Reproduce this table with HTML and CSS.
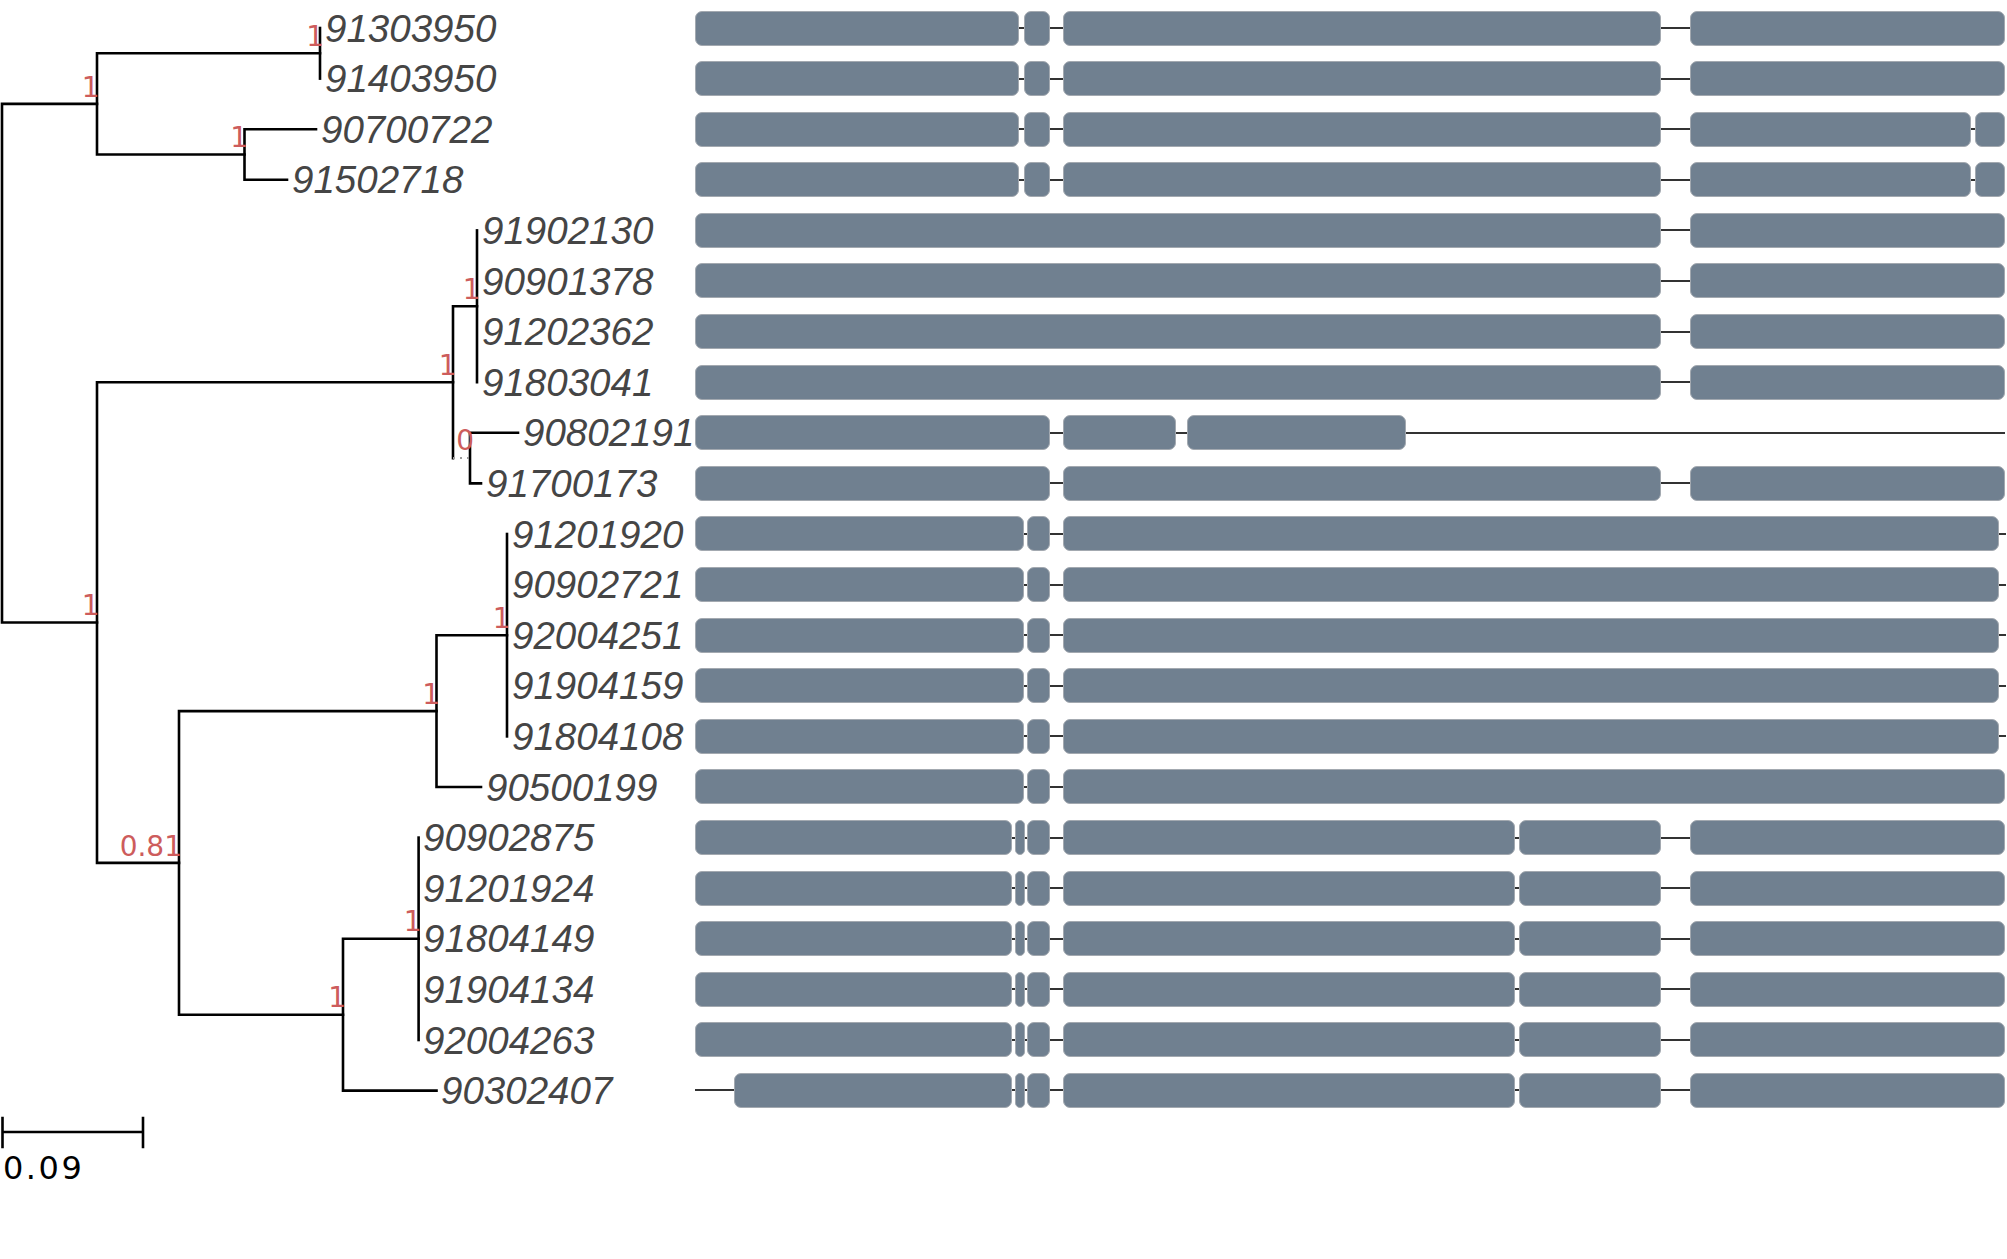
FILE: index.html
```html
<!DOCTYPE html>
<html lang="en">
<head>
<meta charset="utf-8">
<title>Phylogeny and gene structure</title>
<link rel="stylesheet" href="styles.css">
</head>
<body>
<main class="figure">
  <svg class="tree" width="695" height="1259" viewBox="0 0 695 1259" xmlns="http://www.w3.org/2000/svg">
    <g class="branches">
      <!-- root -->
      <path d="M2 103.9V622.5M2 103.9H97M2 622.5H97"/>
      <!-- A -->
      <path d="M97 53.3V154.5M97 53.3H320M97 154.5H244.5"/>
      <path d="M320 28V78.6"/>
      <path d="M244.5 129.2V179.8M244.5 129.2H316M244.5 179.8H287"/>
      <!-- B -->
      <path d="M97 382.2V862.9M97 382.2H453M97 862.9H179"/>
      <path d="M453 306.3V458.1M453 306.3H477"/>
      <path d="M477 230.4V382.2"/>
      <path d="M470 432.8V483.4M470 432.8H518M470 483.4H481"/>
      <!-- C -->
      <path d="M179 711.1V1014.7M179 711.1H436.5M179 1014.7H343"/>
      <path d="M436.5 635.2V787M436.5 635.2H507M436.5 787H481"/>
      <path d="M507 534V736.4"/>
      <path d="M343 938.8V1090.6M343 938.8H418.6M343 1090.6H436.5"/>
      <path d="M418.6 837.6V1040"/>
      <!-- scale bar -->
      <path d="M2.5 1132H143M2.5 1118V1147M143 1118V1147"/>
    </g>
    <path class="short" d="M453 458.1H470"/>
    <g class="tips">
      <text x="325" y="41.6">91303950</text>
      <text x="325" y="92.2">91403950</text>
      <text x="321" y="142.8">90700722</text>
      <text x="292" y="193.4">91502718</text>
      <text x="482" y="244">91902130</text>
      <text x="482" y="294.6">90901378</text>
      <text x="482" y="345.2">91202362</text>
      <text x="482" y="395.8">91803041</text>
      <text x="523" y="446.4">90802191</text>
      <text x="486" y="497">91700173</text>
      <text x="512" y="547.6">91201920</text>
      <text x="512" y="598.2">90902721</text>
      <text x="512" y="648.8">92004251</text>
      <text x="512" y="699.4">91904159</text>
      <text x="512" y="750">91804108</text>
      <text x="486" y="800.6">90500199</text>
      <text x="423" y="851.2">90902875</text>
      <text x="423" y="901.8">91201924</text>
      <text x="423" y="952.4">91804149</text>
      <text x="423" y="1003">91904134</text>
      <text x="423" y="1053.6">92004263</text>
      <text x="441" y="1104.2">90302407</text>
    </g>
    <g class="support">
      <text x="324" y="45.5">1</text>
      <text x="99.5" y="96.5">1</text>
      <text x="248" y="147">1</text>
      <text x="99.5" y="615">1</text>
      <text x="456.5" y="374.7">1</text>
      <text x="480.5" y="298.8">1</text>
      <text x="474" y="450">0</text>
      <text x="182" y="855.5">0.81</text>
      <text x="440" y="703.6">1</text>
      <text x="510.5" y="627.7">1</text>
      <text x="346" y="1007.2">1</text>
      <text x="421.5" y="931.3">1</text>
    </g>
    <text class="scale-label" x="3" y="1179">0.09</text>
  </svg>

  <section class="genes">
    <div class="gene"><span class="ex" style="width:324px"></span><span class="in" style="width:5px"></span><span class="ex" style="width:26px"></span><span class="in" style="width:13px"></span><span class="ex" style="width:598px"></span><span class="in" style="width:29px"></span><span class="ex" style="width:315px"></span></div>
    <div class="gene"><span class="ex" style="width:324px"></span><span class="in" style="width:5px"></span><span class="ex" style="width:26px"></span><span class="in" style="width:13px"></span><span class="ex" style="width:598px"></span><span class="in" style="width:29px"></span><span class="ex" style="width:315px"></span></div>
    <div class="gene"><span class="ex" style="width:324px"></span><span class="in" style="width:5px"></span><span class="ex" style="width:26px"></span><span class="in" style="width:13px"></span><span class="ex" style="width:598px"></span><span class="in" style="width:29px"></span><span class="ex" style="width:281px"></span><span class="in" style="width:4px"></span><span class="ex" style="width:30px"></span></div>
    <div class="gene"><span class="ex" style="width:324px"></span><span class="in" style="width:5px"></span><span class="ex" style="width:26px"></span><span class="in" style="width:13px"></span><span class="ex" style="width:598px"></span><span class="in" style="width:29px"></span><span class="ex" style="width:281px"></span><span class="in" style="width:4px"></span><span class="ex" style="width:30px"></span></div>
    <div class="gene"><span class="ex" style="width:966px"></span><span class="in" style="width:29px"></span><span class="ex" style="width:315px"></span></div>
    <div class="gene"><span class="ex" style="width:966px"></span><span class="in" style="width:29px"></span><span class="ex" style="width:315px"></span></div>
    <div class="gene"><span class="ex" style="width:966px"></span><span class="in" style="width:29px"></span><span class="ex" style="width:315px"></span></div>
    <div class="gene"><span class="ex" style="width:966px"></span><span class="in" style="width:29px"></span><span class="ex" style="width:315px"></span></div>
    <div class="gene"><span class="ex" style="width:355px"></span><span class="in" style="width:13px"></span><span class="ex" style="width:113px"></span><span class="in" style="width:11px"></span><span class="ex" style="width:219px"></span><span class="in" style="width:599px"></span></div>
    <div class="gene"><span class="ex" style="width:355px"></span><span class="in" style="width:13px"></span><span class="ex" style="width:598px"></span><span class="in" style="width:29px"></span><span class="ex" style="width:315px"></span></div>
    <div class="gene"><span class="ex" style="width:329px"></span><span class="in" style="width:3px"></span><span class="ex" style="width:23px"></span><span class="in" style="width:13px"></span><span class="ex" style="width:936px"></span><span class="in" style="width:7px"></span></div>
    <div class="gene"><span class="ex" style="width:329px"></span><span class="in" style="width:3px"></span><span class="ex" style="width:23px"></span><span class="in" style="width:13px"></span><span class="ex" style="width:936px"></span><span class="in" style="width:7px"></span></div>
    <div class="gene"><span class="ex" style="width:329px"></span><span class="in" style="width:3px"></span><span class="ex" style="width:23px"></span><span class="in" style="width:13px"></span><span class="ex" style="width:936px"></span><span class="in" style="width:7px"></span></div>
    <div class="gene"><span class="ex" style="width:329px"></span><span class="in" style="width:3px"></span><span class="ex" style="width:23px"></span><span class="in" style="width:13px"></span><span class="ex" style="width:936px"></span><span class="in" style="width:7px"></span></div>
    <div class="gene"><span class="ex" style="width:329px"></span><span class="in" style="width:3px"></span><span class="ex" style="width:23px"></span><span class="in" style="width:13px"></span><span class="ex" style="width:936px"></span><span class="in" style="width:7px"></span></div>
    <div class="gene"><span class="ex" style="width:329px"></span><span class="in" style="width:3px"></span><span class="ex" style="width:23px"></span><span class="in" style="width:13px"></span><span class="ex" style="width:942px"></span></div>
    <div class="gene"><span class="ex" style="width:317px"></span><span class="in" style="width:3px"></span><span class="ex" style="width:10px"></span><span class="in" style="width:2px"></span><span class="ex" style="width:23px"></span><span class="in" style="width:13px"></span><span class="ex" style="width:452px"></span><span class="in" style="width:4px"></span><span class="ex" style="width:142px"></span><span class="in" style="width:29px"></span><span class="ex" style="width:315px"></span></div>
    <div class="gene"><span class="ex" style="width:317px"></span><span class="in" style="width:3px"></span><span class="ex" style="width:10px"></span><span class="in" style="width:2px"></span><span class="ex" style="width:23px"></span><span class="in" style="width:13px"></span><span class="ex" style="width:452px"></span><span class="in" style="width:4px"></span><span class="ex" style="width:142px"></span><span class="in" style="width:29px"></span><span class="ex" style="width:315px"></span></div>
    <div class="gene"><span class="ex" style="width:317px"></span><span class="in" style="width:3px"></span><span class="ex" style="width:10px"></span><span class="in" style="width:2px"></span><span class="ex" style="width:23px"></span><span class="in" style="width:13px"></span><span class="ex" style="width:452px"></span><span class="in" style="width:4px"></span><span class="ex" style="width:142px"></span><span class="in" style="width:29px"></span><span class="ex" style="width:315px"></span></div>
    <div class="gene"><span class="ex" style="width:317px"></span><span class="in" style="width:3px"></span><span class="ex" style="width:10px"></span><span class="in" style="width:2px"></span><span class="ex" style="width:23px"></span><span class="in" style="width:13px"></span><span class="ex" style="width:452px"></span><span class="in" style="width:4px"></span><span class="ex" style="width:142px"></span><span class="in" style="width:29px"></span><span class="ex" style="width:315px"></span></div>
    <div class="gene"><span class="ex" style="width:317px"></span><span class="in" style="width:3px"></span><span class="ex" style="width:10px"></span><span class="in" style="width:2px"></span><span class="ex" style="width:23px"></span><span class="in" style="width:13px"></span><span class="ex" style="width:452px"></span><span class="in" style="width:4px"></span><span class="ex" style="width:142px"></span><span class="in" style="width:29px"></span><span class="ex" style="width:315px"></span></div>
    <div class="gene"><span class="in" style="width:39px"></span><span class="ex" style="width:278px"></span><span class="in" style="width:3px"></span><span class="ex" style="width:10px"></span><span class="in" style="width:2px"></span><span class="ex" style="width:23px"></span><span class="in" style="width:13px"></span><span class="ex" style="width:452px"></span><span class="in" style="width:4px"></span><span class="ex" style="width:142px"></span><span class="in" style="width:29px"></span><span class="ex" style="width:315px"></span></div>
  </section>
</main>
</body>
</html>
```

FILE: styles.css
```css
html, body {
  margin: 0;
  padding: 0;
  background: #ffffff;
}

.figure {
  display: flex;
  align-items: flex-start;
  width: 2007px;
  height: 1259px;
  overflow: hidden;
}

.tree {
  flex: none;
  display: block;
  overflow: visible;
}

.branches path {
  fill: none;
  stroke: #000000;
  stroke-width: 2.6;
  stroke-linecap: square;
}

.short {
  fill: none;
  stroke: #9a9a9a;
  stroke-width: 2;
  stroke-dasharray: 2 5;
}

.tips text {
  font-family: "Liberation Sans", Arial, sans-serif;
  font-style: italic;
  font-size: 38.5px;
  fill: #454545;
}

.support text {
  font-family: "DejaVu Sans", sans-serif;
  font-size: 28px;
  fill: #cd5c5c;
  text-anchor: end;
}

.scale-label {
  font-family: "DejaVu Sans", sans-serif;
  font-size: 32px;
  letter-spacing: 2.5px;
  fill: #000000;
}

.genes {
  flex: none;
  display: flex;
  flex-direction: column;
  gap: 15.6px;
  padding-top: 10.5px;
  width: 1312px;
}

.gene {
  display: flex;
  align-items: center;
  height: 35px;
}

.ex {
  flex: none;
  box-sizing: border-box;
  height: 35px;
  background: #708090;
  border: 1px solid #a3a9b0;
  border-radius: 7px;
}

.in {
  flex: none;
  height: 2px;
  background: #333333;
}
```
